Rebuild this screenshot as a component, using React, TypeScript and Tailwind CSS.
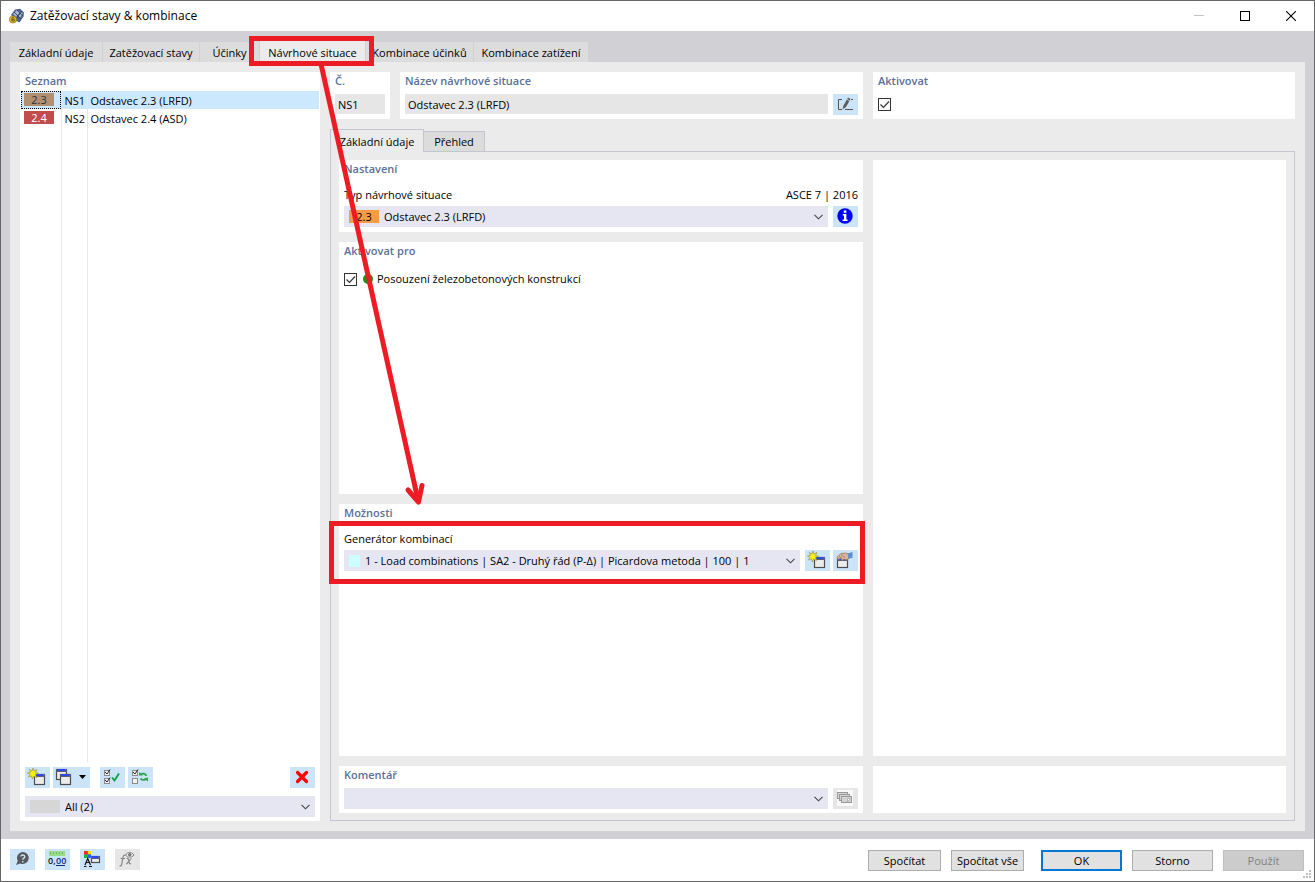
import { ReactNode, useState } from "react";

type Situation = { id: string; code: string; name: string; badge: string };

const situations: Situation[] = [
  { id: "NS1", code: "2.3", name: "Odstavec 2.3 (LRFD)", badge: "bg-[#b09070] text-[#26323c]" },
  { id: "NS2", code: "2.4", name: "Odstavec 2.4 (ASD)", badge: "bg-[#c04c4c] text-white" },
];

const mainTabs = [
  { label: "Základní údaje", width: "w-[93px]" },
  { label: "Zatěžovací stavy", width: "w-[97px]" },
  { label: "Účinky", width: "w-[60px]" },
  { label: "Návrhové situace", width: "w-[106px]" },
  { label: "Kombinace účinků", width: "w-[108px]" },
  { label: "Kombinace zatížení", width: "w-[115px]" },
];

const Card = (props: { title?: string; className?: string; children?: ReactNode }) => (
  <section className={"flex flex-col bg-white px-[5px] pb-1 " + (props.className || "")}>
    {props.title && (
      <h2 className="h-[22px] shrink-0 leading-[18px] font-semibold text-[#5b6f98]">{props.title}</h2>
    )}
    {props.children}
  </section>
);

const IconButton = (props: { label: string; wide?: boolean; disabled?: boolean; children: ReactNode }) => (
  <button
    aria-label={props.label}
    title={props.label}
    disabled={props.disabled}
    className={
      "h-[21px] shrink-0 " +
      (props.wide ? "w-[37px] " : "w-[25px] ") +
      (props.disabled ? "bg-[#e6e6e6]" : "bg-[#cce4f7]")
    }
  >
    <svg
      width={props.wide ? 37 : 25}
      height="21"
      viewBox={props.wide ? "0 0 37 21" : "0 0 25 21"}
      className="block"
    >
      {props.children}
    </svg>
  </button>
);

// select with a swatch in front of the value and a thin chevron behind it
const SelectBox = (props: { label?: string; id: string; swatch?: ReactNode; options: string[] }) => (
  <div className="flex h-[21px] min-w-0 flex-1 items-center gap-[5px] bg-[#e6e6f2] px-[5px]">
    {props.swatch}
    <select
      id={props.id}
      aria-label={props.label}
      className="h-[21px] min-w-0 flex-1 appearance-none bg-transparent leading-[21px] outline-none"
    >
      {props.options.map((option) => (
        <option key={option}>{option}</option>
      ))}
    </select>
    <svg width="9" height="6" viewBox="0 0 9 6" className="pointer-events-none shrink-0">
      <path d="M.5 .8l4 4 4-4" fill="none" stroke="#444" strokeWidth="1.1" />
    </svg>
  </div>
);

const CheckBox = (props: { id: string; label?: string }) => {
  const [checked, setChecked] = useState<boolean>(true);
  return (
    <span className="grid size-[13px] shrink-0">
      <input
        type="checkbox"
        id={props.id}
        aria-label={props.label}
        checked={checked}
        onChange={() => setChecked(!checked)}
        className="col-start-1 row-start-1 size-[13px] appearance-none border border-[#333] bg-white"
      />
      {checked && (
        <svg viewBox="0 0 13 13" className="pointer-events-none col-start-1 row-start-1">
          <path d="M2.5 6.5l3 3 5.500-6" fill="none" stroke="#333" strokeWidth="1.2" />
        </svg>
      )}
    </span>
  );
};

const WindowShape = (props: { x: number; y: number; w?: number; h?: number }) => {
  const w = props.w || 10;
  const h = props.h || 10;
  return (
    <g>
      <rect x={props.x + 0.5} y={props.y + 0.5} width={w} height={h} fill="#ececec" stroke="#4d4d4d" strokeWidth="1.2" />
      <rect x={props.x} y={props.y} width={w + 1} height="3" fill="#5a6070" />
      <rect x={props.x + 1} y={props.y} width={w - 2} height="2" fill="#3048e8" />
    </g>
  );
};

const Star = () => (
  <path
    d="M8 1l1 3 3-1.500-1.500 3 3 .800-3 1.200 1.200 3-3-1.300L7.300 12l-.800-3-3 1 1.500-2.600L2.500 6l3-.600L4.300 2.500 7 4z"
    fill="#f5ee18"
    stroke="#8b8a3c"
    strokeWidth=".6"
  />
);

const TickBoxes = (props: { both?: boolean }) => (
  <g fill="#f2f2f2" stroke="#8a8a8a">
    <rect x="4.500" y="3.500" width="5" height="5" />
    <rect x="4.500" y="11.500" width="5" height="5" />
    <path d="M5 5l2 2 3-4.500" fill="none" stroke="#222" />
    {props.both && <path d="M5 13l2 2 3-4.500" fill="none" stroke="#222" />}
  </g>
);

const NewIcon = () => (
  <>
    <WindowShape x={9} y={7} />
    <Star />
  </>
);

const AppLogo = () => (
  <svg width="16" height="16" viewBox="0 0 16 16">
    <path d="M2 7L6 1.500 11 .800l4 3.700-.500 4-4 6-4-2z" fill="#4b6189" />
    <path d="M4 6l4-4 3 2-4 5zM9 8l3-4 2 1-3 5z" fill="#a4b5d0" />
    <path d="M5 4l7 7M8 2l6 6M7 11l6-8" stroke="#26395c" strokeWidth=".8" />
    <circle cx="4" cy="11.500" r="3.600" fill="#e2b92c" stroke="#8a721e" strokeWidth=".7" />
    <path d="M5.300 9.800H3v3.200h2.300v-1.600H3.200" fill="none" stroke="#6d5a16" />
  </svg>
);

const TitleBar = () => (
  <header className="flex h-[30px] shrink-0 items-center bg-white pl-2">
    <AppLogo />
    <h1 className="ml-[5px] flex-1 text-[12px]">Zatěžovací stavy &amp; kombinace</h1>
    <button aria-label="Minimalizovat" className="grid h-[30px] w-[46px] place-items-center">
      <svg width="10" height="10"><path d="M0 4.500h10" stroke="#c4c4c4" /></svg>
    </button>
    <button aria-label="Maximalizovat" className="grid h-[30px] w-[46px] place-items-center">
      <svg width="10" height="10"><rect x=".5" y=".5" width="9" height="9" fill="none" stroke="#000" /></svg>
    </button>
    <button aria-label="Zavřít" className="grid h-[30px] w-[46px] place-items-center">
      <svg width="10" height="10"><path d="M0 0l10 10M10 0L0 10" stroke="#000" strokeWidth="1.100" /></svg>
    </button>
  </header>
);

const SituationList = () => {
  const [selected, setSelected] = useState<string>("NS1");

  return (
    <section className="flex w-[300px] shrink-0 flex-col bg-white pb-1">
      <h2 className="h-[19px] px-[5px] leading-[18px] font-semibold text-[#5b6f98]">Seznam</h2>
      <div className="flex flex-1 px-px">
        <table className="w-full table-fixed border-collapse">
          <colgroup>
            <col className="w-10" />
            <col className="w-[26px]" />
            <col />
          </colgroup>
          <tbody>
            {situations.map((item) => (
              <tr
                key={item.id}
                onClick={() => setSelected(item.id)}
                className={"h-[18px] " + (selected === item.id ? "bg-[#cce8ff]" : "")}
              >
                <td className="p-0">
                  <div
                    className={
                      "flex h-[18px] w-10 items-start border border-dotted pt-px pl-[2px] " +
                      (selected === item.id ? "border-black" : "border-transparent")
                    }
                  >
                    <span className={"h-[13px] w-[30px] text-center leading-[13px] " + item.badge}>{item.code}</span>
                  </div>
                </td>
                <td className="border-x border-[#e6e6e6] p-0 pt-[2px] pl-[3px] leading-4">{item.id}</td>
                <td className="p-0 pt-[2px] pl-[3px] leading-4">{item.name}</td>
              </tr>
            ))}
            <tr>
              <td />
              <td className="border-x border-[#e6e6e6]" />
              <td />
            </tr>
          </tbody>
        </table>
      </div>
      <div className="mt-[5px] flex gap-[3px] px-[5px]">
        <IconButton label="Nový"><NewIcon /></IconButton>
        <IconButton label="Kopírovat" wide>
          <WindowShape x={3} y={2} />
          <WindowShape x={7} y={7} />
          <path d="M26 8h7l-3.500 4z" fill="#000" />
        </IconButton>
        <div className="w-1" />
        <IconButton label="Vybrat vše">
          <TickBoxes both />
          <path d="M12 10.500l2.500 3 4.500-7" fill="none" stroke="#14a044" strokeWidth="1.900" />
        </IconButton>
        <IconButton label="Obrátit výběr">
          <TickBoxes />
          <path d="M12.500 7.500c2-1.500 5-1 6 1.500M18.500 12c-2 1.500-5 1-6-.500" fill="none" stroke="#2fa353" strokeWidth="1.800" />
          <path d="M11 8.500V5l4 3.500zM20 10.500v4l-4-3z" fill="#2fa353" />
        </IconButton>
        <div className="flex-1" />
        <IconButton label="Smazat">
          <path d="M7.500 5.500l9 9M16.500 5.500l-9 9" stroke="#f00" strokeWidth="3.200" strokeLinecap="round" />
        </IconButton>
      </div>
      <div className="mt-2 flex px-[5px]">
        <SelectBox
          id="filter"
          label="Filtr seznamu"
          swatch={<span className="h-[13px] w-[30px] bg-[#d6d6d6]" />}
          options={["All (2)"]}
        />
      </div>
    </section>
  );
};

const BasicData = () => (
  <div className="grid flex-1 grid-cols-[524fr_413fr] gap-[10px] border border-t-0 border-[#c5c5d1] px-2 pt-2 pb-[7px]">
    <div className="flex min-w-0 flex-col gap-[10px]">
      <Card title="Nastavení" className="pb-[5px]">
        <div className="mt-1 flex h-5 justify-between leading-[18px]">
          <label htmlFor="type">Typ návrhové situace</label>
          <span>ASCE 7 | 2016</span>
        </div>
        <div className="flex gap-[5px]">
          <SelectBox
            id="type"
            swatch={<span className="h-[13px] w-[30px] bg-[#f79c46] text-center leading-[13px]">2.3</span>}
            options={["Odstavec 2.3 (LRFD)", "Odstavec 2.4 (ASD)"]}
          />
          <IconButton label="Informace">
            <circle cx="12" cy="10" r="7.700" fill="#0000fb" />
            <path d="M10.800 4.500h2.600v2.300h-2.600zM9.800 8h3.600v5.600h1.200V15H9.600v-1.400H11V9.400H9.800z" fill="#fff" />
          </IconButton>
        </div>
      </Card>
      <Card title="Aktivovat pro" className="flex-1">
        <div className="mt-[6px] flex h-[18px] items-center">
          <CheckBox id="concrete" />
          <span className="ml-[6px] size-[10px] rounded-full bg-[#129412]" />
          <label htmlFor="concrete" className="ml-1">Posouzení železobetonových konstrukcí</label>
        </div>
      </Card>
      <Card title="Možnosti" className="flex-1">
        <label htmlFor="generator" className="mt-1 h-5 leading-[18px]">Generátor kombinací</label>
        <div className="flex gap-[5px]">
          <SelectBox
            id="generator"
            swatch={<span className="h-3 w-[11px] bg-[#ccffff]" />}
            options={["1 - Load combinations | SA2 - Druhý řád (P-Δ) | Picardova metoda | 100 | 1"]}
          />
          <div className="flex gap-[3px]">
            <IconButton label="Nový generátor"><NewIcon /></IconButton>
            <IconButton label="Upravit generátor">
              <WindowShape x={4} y={8} w={10} h={9} />
              <path d="M4 7l4-3.500 5-.500 3 1.500v4l-3 1.500-2-1-2 1.500-1-2-3 1z" fill="#d9b596" stroke="#8f7058" strokeWidth=".7" />
              <path d="M8 4.500l4 3M6 6.500l3 2" stroke="#8f7058" strokeWidth=".7" />
              <path d="M14.500 3.500L19.500 2v6l-4 .500z" fill="#5d8fd1" />
            </IconButton>
          </div>
        </div>
      </Card>
      <Card title="Komentář">
        <div className="flex gap-[5px]">
          <SelectBox id="comment" label="Komentář" options={[""]} />
          <IconButton label="Knihovna komentářů" disabled>
            <rect x="4" y="2" width="16" height="16" fill="#f8f8f8" />
            <g fill="#d4d4d4" stroke="#999">
              <rect x="4.500" y="4.500" width="10" height="6" />
              <rect x="6.500" y="6.500" width="10" height="6" />
              <rect x="8.500" y="8.500" width="10" height="6" />
            </g>
            <path d="M14.500 10.500h3l-3 3z" fill="#fff" stroke="#999" strokeWidth=".6" />
          </IconButton>
        </div>
      </Card>
    </div>
    <div className="flex min-w-0 flex-col gap-[10px]">
      <Card className="flex-1" />
      <Card className="h-[47px]" />
    </div>
  </div>
);

const Footer = () => {
  const button = "h-[21px] border leading-[19px] ";
  return (
    <footer className="flex h-[42px] shrink-0 justify-between bg-white px-[9px] pt-[10px]">
      <div className="flex gap-[10px]">
        <IconButton label="Nápověda">
          <path d="M12.800 3a6 6 0 1 1-2.500 11.500L6 16l1.800-4A6 6 0 0 1 12.800 3z" fill="#57595c" />
          <path d="M10.800 7.500c.300-2.200 4-2 4 .200 0 1.400-2 1.400-2 3M12.800 12v1.500" fill="none" stroke="#cce4f7" strokeWidth="1.400" />
        </IconButton>
        <IconButton label="Jednotky">
          <rect x="4" y="2" width="16" height="5" fill="#9bdc8c" />
          <path d="M5.500 3v2M8.500 3v2M11.500 3v2M14.500 3v2M17.500 3v2" stroke="#6fb865" />
          <text x="3" y="15" fontSize="9" fontWeight="600" fontFamily="Open Sans, sans-serif" fill="#111">0,</text>
          <text x="11" y="15" fontSize="9" fontWeight="600" fontFamily="Open Sans, sans-serif" fill="#152b80">00</text>
          <path d="M11 16.500h9" stroke="#152b80" />
        </IconButton>
        <IconButton label="Zobrazení">
          <rect x="4" y="2" width="7" height="7" fill="#777" />
          <path d="M4 2h3v3H4z" fill="#f22" />
          <path d="M8 2h3v3H8z" fill="#fd0" />
          <path d="M4 6h3v3H4z" fill="#1b3" />
          <path d="M8 6h3v3H8z" fill="#26f" />
          <path d="M5 16l2.700-6.500L10.500 16M6 13.500h3.500M4 17.500h2.500M9 17.500h3" fill="none" stroke="#111" strokeWidth="1.200" />
          <WindowShape x={11} y={7} w={8} h={6} />
        </IconButton>
        <IconButton label="Funkce" disabled>
          <path d="M10.500 6.500c-1.500-1-2.300 0-2.600 2L6.800 15c-.300 1.800-1 2.200-2.300 1.800M5.500 9.500h4.500M11.500 9.500c2-.500 2 1 2.500 3s.500 2.800 2 2M16.500 9.500c-1.500 0-3.500 5.500-5.500 5.500" fill="none" stroke="#858585" strokeWidth="1.200" />
          <path d="M10.500 6c2-3.500 6-3.500 8.500 0-2.500 3-6.500 3-8.500 0z" fill="#e6e6e6" stroke="#858585" />
          <circle cx="14.700" cy="5.800" r="1.700" fill="#777" />
        </IconButton>
      </div>
      <div className="flex gap-[10px] pt-px pr-px">
        <button className={button + "w-[73px] border-[#adadad] bg-[#e1e1e1]"}>Spočítat</button>
        <button className={button + "w-[73px] border-[#adadad] bg-[#e1e1e1]"}>Spočítat vše</button>
        <button className="ml-[7px] h-[21px] w-[81px] border-2 border-[#0078d7] bg-[#e1e1e1] leading-[17px]">OK</button>
        <button className={button + "w-[81px] border-[#adadad] bg-[#e1e1e1]"}>Storno</button>
        <button disabled className={button + "w-[81px] border-[#bfbfbf] bg-[#cccccc] text-[#838383]"}>Použít</button>
      </div>
      <svg width="8" height="8" className="absolute right-[3px] bottom-[3px]" fill="#bfbfbf">
        <path d="M6 0h2v2H6zM3 3h2v2H3zM6 3h2v2H6zM0 6h2v2H0zM3 6h2v2H3zM6 6h2v2H6z" />
      </svg>
    </footer>
  );
};

// red frames and the arrow that leads from the tab to the generator
const Annotation = () => (
  <div className="pointer-events-none absolute -inset-px">
    <div className="absolute top-[36px] left-[249px] h-[30px] w-[125px] border-5 border-[#ed1c24]" />
    <div className="absolute top-[521px] left-[329px] h-[63px] w-[536px] border-5 border-[#ed1c24]" />
    <svg width="120" height="445" viewBox="310 63 120 445" className="absolute top-[63px] left-[310px]">
      <path d="M321 64L418 500" stroke="#ed1c24" strokeWidth="5" />
      <path d="M408 490l10.500 12 3.500-16.500" fill="none" stroke="#ed1c24" strokeWidth="5" strokeLinecap="round" strokeLinejoin="round" />
    </svg>
  </div>
);

const App = () => {
  const [tab, setTab] = useState<string>("Návrhové situace");

  return (
    <div className="relative flex min-h-screen flex-col border border-[#666] bg-[#d0d0d5] font-['Open_Sans','Noto_Sans',sans-serif] text-[11px] text-black">
      <TitleBar />
      <main className="flex flex-1 flex-col px-[9px] pt-[10px] pb-2">
        <nav className="flex h-[21px] items-end">
          {mainTabs.map((item) => (
            <button
              key={item.label}
              onClick={() => setTab(item.label)}
              className={
                "shrink-0 border-r border-[#d0d0d5] whitespace-nowrap " +
                item.width +
                (tab === item.label ? " h-[21px] bg-[#ebebeb] pt-[3px]" : " h-5 bg-[#dcdcdc] pt-[2px]")
              }
            >
              {item.label}
            </button>
          ))}
        </nav>
        <div className="flex flex-1 gap-[10px] bg-[#ebebeb] p-[10px]">
          <SituationList />
          <div className="flex min-w-0 flex-1 flex-col">
            <div className="grid grid-cols-[533fr_422fr] gap-[10px]">
              <div className="flex min-w-0 gap-[10px]">
                <Card title="Č." className="w-[60px]">
                  <input aria-label="Č." readOnly value="NS1" className="h-5 w-full bg-[#e6e6e6] px-[3px]" />
                </Card>
                <Card title="Název návrhové situace" className="flex-1">
                  <div className="flex gap-[5px]">
                    <input
                      aria-label="Název návrhové situace"
                      readOnly
                      value="Odstavec 2.3 (LRFD)"
                      className="h-5 min-w-0 flex-1 bg-[#e6e6e6] px-[3px]"
                    />
                    <IconButton label="Upravit název">
                      <path d="M9 5.500H5.500v10H9M12 15.500h8M18 5.500h2" fill="none" stroke="#555" />
                      <path d="M9.500 15.500l1-4 4.500-8 2.500 1.500-4.500 8z" fill="#5c5c5c" />
                      <path d="M13.500 5l3 1.800" stroke="#cce4f7" strokeWidth=".8" />
                    </IconButton>
                  </div>
                </Card>
              </div>
              <Card title="Aktivovat">
                <div className="pt-1">
                  <CheckBox id="activate" label="Aktivovat" />
                </div>
              </Card>
            </div>
            <div className="mt-[10px] flex h-[23px] items-end">
              <button className="h-[23px] w-[94px] border border-b-0 border-[#c5c5d1] pt-[2px]">Základní údaje</button>
              <button className="h-[21px] w-[61px] border border-l-0 border-[#c5c5d1] bg-[#dcdcdc] pt-[2px]">Přehled</button>
              <div className="flex-1 border-b border-[#c5c5d1]" />
            </div>
            <BasicData />
          </div>
        </div>
      </main>
      <Footer />
      <Annotation />
    </div>
  );
};

export default App;
